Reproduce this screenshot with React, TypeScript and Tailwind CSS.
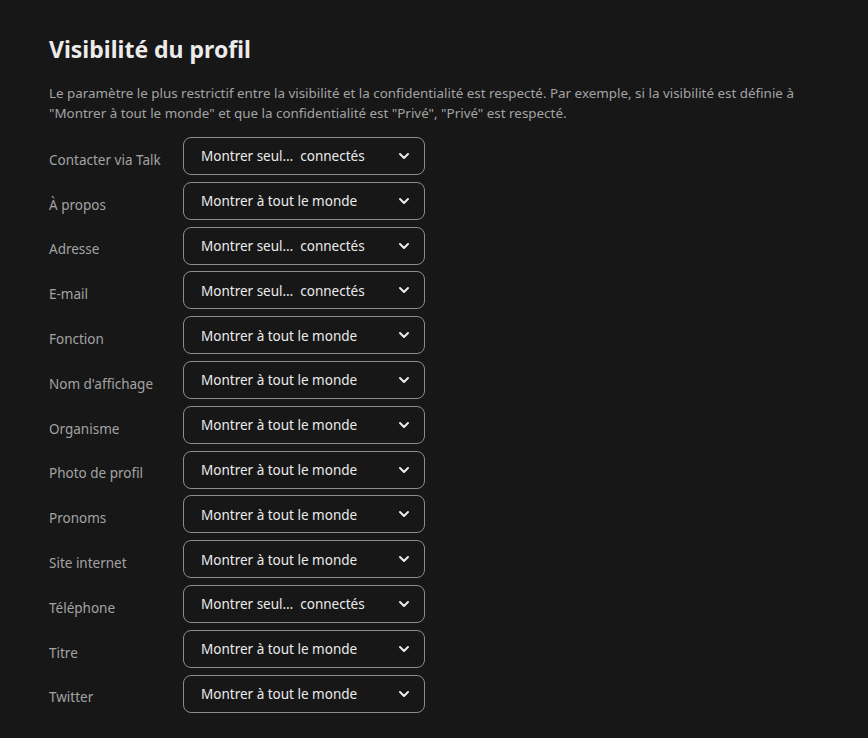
const seul = 'Montrer seul…  connectés'
const tous = 'Montrer à tout le monde'

const rows: { label: string; value: string }[] = [
  { label: 'Contacter via Talk', value: seul },
  { label: 'À propos', value: tous },
  { label: 'Adresse', value: seul },
  { label: 'E-mail', value: seul },
  { label: 'Fonction', value: tous },
  { label: 'Nom d\'affichage', value: tous },
  { label: 'Organisme', value: tous },
  { label: 'Photo de profil', value: tous },
  { label: 'Pronoms', value: tous },
  { label: 'Site internet', value: tous },
  { label: 'Téléphone', value: seul },
  { label: 'Titre', value: tous },
  { label: 'Twitter', value: tous },
]

const Chevron = () => (
  <svg width="12" height="12" viewBox="0 0 24 24" fill="none" stroke="currentColor" strokeWidth="4" strokeLinecap="round" strokeLinejoin="round">
    <path d="M4 8l8 8 8-8" />
  </svg>
)

export default function App() {
  return (
    <div className="min-h-screen bg-[#171717] font-['Noto_Sans',sans-serif]">
      <section className="pl-[48px] pr-[40px] pt-[34px]">
        <h2 className="pl-px text-[23px] font-bold leading-[30px] text-[#ebebeb]">Visibilité du profil</h2>
        <p className="mt-[19px] pl-px text-[13.4px] leading-[20px] text-[#a3a3a3]">
          Le paramètre le plus restrictif entre la visibilité et la confidentialité est respecté. Par exemple, si la visibilité est définie à "Montrer à tout le monde" et que la confidentialité est "Privé", "Privé" est respecté.
        </p>
        <div className="mt-[14px] flex flex-col gap-[6.8px]">
          {rows.map((row) => (
            <div key={row.label} className="flex items-center">
              <span className="w-[135px] pl-px pt-[8px] text-[13.5px] text-[#a3a3a3]">{row.label}</span>
              <button className="flex h-[38px] w-[242px] items-center justify-between rounded-[8px] border border-[#8c8c8c] pl-[17px] pr-[14px] text-left text-[13.5px] text-[#ebebeb]">
                <span className="whitespace-pre pt-px">{row.value}</span>
                <Chevron />
              </button>
            </div>
          ))}
        </div>
      </section>
    </div>
  )
}
